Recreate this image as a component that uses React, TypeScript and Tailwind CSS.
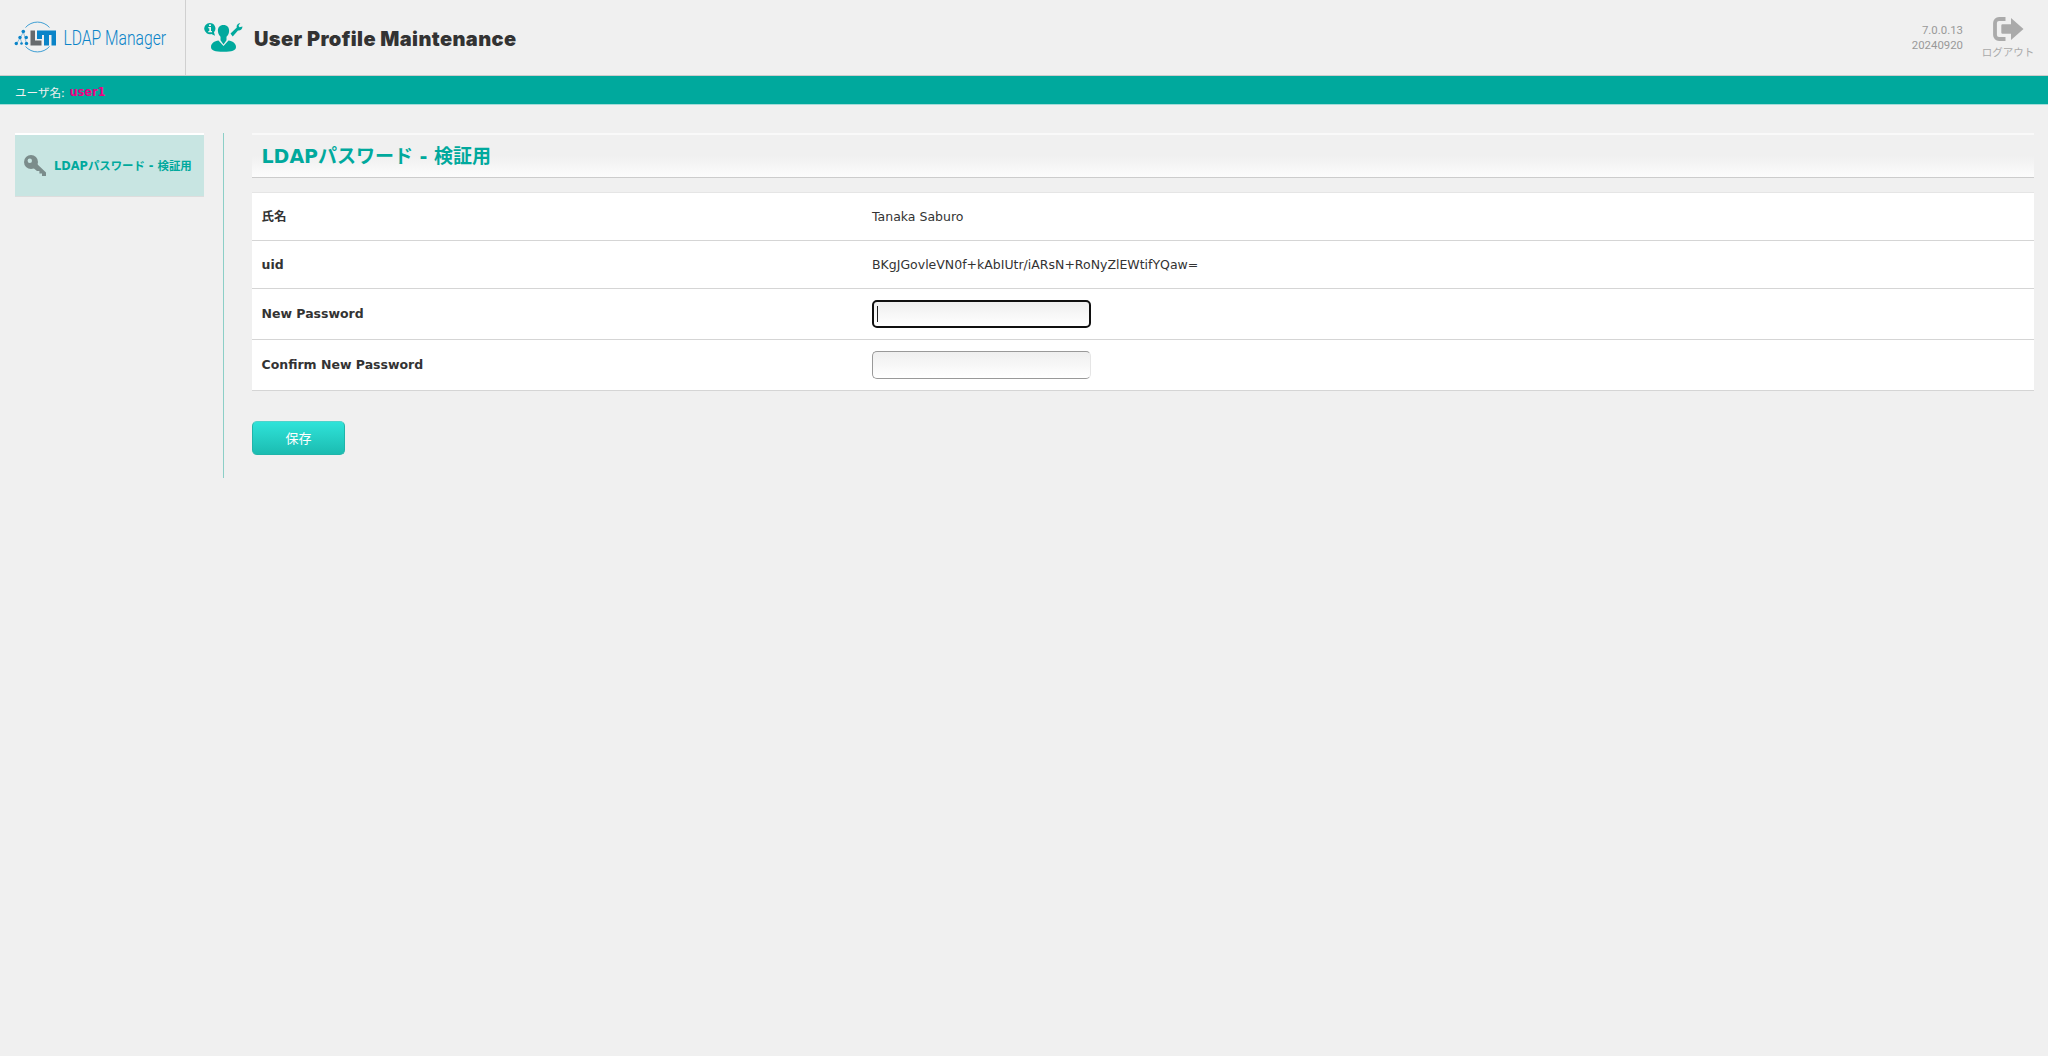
import type { ReactNode } from 'react';

const BODY_FONT = "font-['DejaVu_Sans','Noto_Sans_CJK_JP',sans-serif]";

export default function App() {
  return (
    <div className={`min-h-screen h-[1056px] bg-[#f0f0f0] text-[12.5px] text-[#333] ${BODY_FONT}`}>
      <Header />
      <div className="flex h-7 items-center bg-[#00a99d] pl-[15px] pt-[3px] text-[#f0f0f0]">
        <span className="text-[11.6px] leading-4 font-['Noto_Sans_CJK_JP',sans-serif]">ユーザ名:</span>
        <span className="ml-[5px] text-[11.4px] font-bold leading-4 text-[#ec0083]">user1</span>
      </div>
      <div className="h-px bg-[#a3dcd8]" />

      <div className="flex pr-3.5 pt-7">
        <Sidebar />
        <main className="ml-[28px] flex-1">
          <div className="h-0.5 bg-[#f9f9f9]" />
          <h1 className="flex h-[43px] items-center border-b border-[#ccc] bg-linear-to-b from-[#f0f0f0] from-50% to-[#fcfcfc] pl-[9.5px] text-[19px] font-bold text-[#00a99d]">
            LDAPパスワード - 検証用
          </h1>
          <div className="mt-3.5 border-t border-[#e5e5e5] bg-white">
            <Row label="氏名" height="h-12 pt-0.5">Tanaka Saburo</Row>
            <Row label="uid" height="h-12 pt-0.5">BKgJGovleVN0f+kAbIUtr/iARsN+RoNyZlEWtifYQaw=</Row>
            <Row label="New Password" height="h-[51px]">
              <div className="flex h-7 w-[219px] items-center rounded-[5px] border-2 border-[#101010] bg-linear-to-b from-[#efefef] to-white pl-[3px]">
                <span className="h-4 w-px bg-[#222]" />
              </div>
            </Row>
            <Row label="Confirm New Password" height="h-[51px]">
              <div className="h-7 w-[219px] rounded-[5px] border border-[#999] border-r-[#e5e5e5] bg-linear-to-b from-[#efefef] to-white" />
            </Row>
          </div>
          <button className="mt-[30px] h-[34px] w-[93px] rounded-[5px] border border-[#1fb5aa] border-t-[#4fd3cb] bg-linear-to-b from-[#2fe3d9] to-[#1bbcb1] pt-px text-[13px] text-white">
            保存
          </button>
        </main>
      </div>
    </div>
  );
}

function Header() {
  return (
    <header className="flex h-[76px] border-b border-[#ccc]">
      <div className="w-[186px] border-r border-[#d0d0d0] pl-3.5 pt-2.5">
        <Logo />
      </div>
      <div className="pl-[18px] pt-[22px]">
        <ProfileIcon />
      </div>
      <h2 className="ml-2.5 pt-[24.5px] text-[20px] font-black leading-7 tracking-[0.38px] whitespace-nowrap font-['Inter',sans-serif]">
        User Profile Maintenance
      </h2>
      <div className="ml-auto pr-[19px] pt-[22.5px] text-right text-[11.4px] leading-[15px] text-[#999] font-['Roboto',sans-serif]">
        <div>7.0.0.13</div>
        <div>20240920</div>
      </div>
      <div className="flex w-[66px] flex-col items-center pr-3.5 pt-[17px] text-[#aaa]">
        <LogoutIcon />
        <span className="mt-[3px] text-[10.5px] leading-4 whitespace-nowrap font-['Noto_Sans_CJK_JP',sans-serif]">ログアウト</span>
      </div>
    </header>
  );
}

function Sidebar() {
  return (
    <aside className="flex h-[345px] w-[224px] border-r border-[#8ccfc7] pl-[15px]">
      <div className="flex h-[64px] w-[189px] items-center border-t-2 border-b border-t-white border-b-[#ddd] bg-[#c8e5e2] pl-[9px] text-[11.4px] font-bold text-[#00a99d]">
        <KeyIcon />
        <span className="ml-2 pt-[3px] whitespace-nowrap">LDAPパスワード - 検証用</span>
      </div>
    </aside>
  );
}

function Row({ label, height, children }: { label: string; height: string; children: ReactNode }) {
  return (
    <div className={`flex items-center border-b border-[#d5d5d5] pl-[9.5px] ${height}`}>
      <div className="w-[610.5px] font-bold">{label}</div>
      <div>{children}</div>
    </div>
  );
}

function Logo() {
  return (
    <svg className="overflow-visible" width="160" height="54" viewBox="14 10 160 54">
      <g fill="none" stroke="#3f9fd4" strokeWidth="1">
        <path d="M25.500 27.500a16 16 0 0 1 24 0" />
        <path d="M25.500 46.500a16 16 0 0 0 24 0" />
        <path d="M17 43l6.500-11 3 12M20 37.500l2 6" strokeWidth="0.600" />
      </g>
      <g fill="#0a84c8">
        <circle cx="23.300" cy="31.500" r="1.800" />
        <circle cx="20" cy="37.500" r="1.700" />
        <circle cx="26.300" cy="37.500" r="1.700" />
        <circle cx="16.300" cy="43.500" r="1.700" />
        <circle cx="21.500" cy="43.500" r="1.300" />
        <circle cx="26.500" cy="43.500" r="1.700" />
      </g>
      <path d="M30.500 30.500h4.500v10h6.500v5h-11z" fill="#666a6d" />
      <path d="M37 30.500h19v15h-4.500V35H49v10.500h-5V35h-2v4h-5z" fill="#0a84c8" />
      <text x="63.500" y="45" fontSize="21" fontWeight="300" fill="#0a84c8" textLength="102.500" lengthAdjust="spacingAndGlyphs" fontFamily="Roboto, sans-serif">
        LDAP Manager
      </text>
    </svg>
  );
}

function ProfileIcon() {
  return (
    <svg width="40" height="31" viewBox="204 22 40 31" fill="#00a99d">
      <path d="M209.800 23a5.600 5.600 0 1 0 1.500 11l3.700 1.800-1-3.500A5.600 5.600 0 0 0 209.800 23z" />
      <path d="M209 24.500h2v1.500h-2zM208.300 27h2.700v4h1v1.200h-3.700V31h1v-2.800h-1z" fill="#f0f0f0" />
      <path d="M223.500 25c-3.800 0-5.800 2.600-5.600 6 .2 3 1.500 4.500 2.600 5.800v3.400l3 4.200 3-4.200v-3.400c1.300-1.300 2.500-3 2.600-5.800.2-3.400-1.800-6-5.600-6z" />
      <path d="M218.500 40.500c-4 .8-7.500 2.500-7.500 6.500 0 3.500 4 4.800 12.500 4.800s12.500-1.300 12.500-4.800c0-4-3.500-5.700-7.500-6.500l-5 5.500z" />
      <path d="M230.500 33.500l6.300-6c-.5-2.300 1.200-4.300 3.500-4.500l-1.800 2.800 1 1.500 3-.8c-.2 2.700-2 4.300-4.500 4l-5.300 6z" />
    </svg>
  );
}

function LogoutIcon() {
  return (
    <svg width="31" height="24" viewBox="0 0 31 24" fill="#aaa">
      <path d="M12.500 2H6a4 4 0 0 0-4 4v12a4 4 0 0 0 4 4h6.500" fill="none" stroke="#aaa" strokeWidth="3.800" />
      <path d="M9.500 7.200H18V1l12.500 11L18 23v-6.200H9.500a1.200 1.200 0 0 1-1.200-1.200V8.400a1.200 1.200 0 0 1 1.200-1.200z" />
    </svg>
  );
}

function KeyIcon() {
  return (
    <svg width="22" height="21" viewBox="0 0 22 21">
      <circle cx="7" cy="7" r="7" fill="#7b8c8b" />
      <circle cx="5.800" cy="5.800" r="2.200" fill="#c8e5e2" />
      <path d="M11.500 7.500L22 17.500V21h-4v-2.400h-2.600v-2.600H13l-5.500-4.500z" fill="#7b8c8b" />
    </svg>
  );
}
